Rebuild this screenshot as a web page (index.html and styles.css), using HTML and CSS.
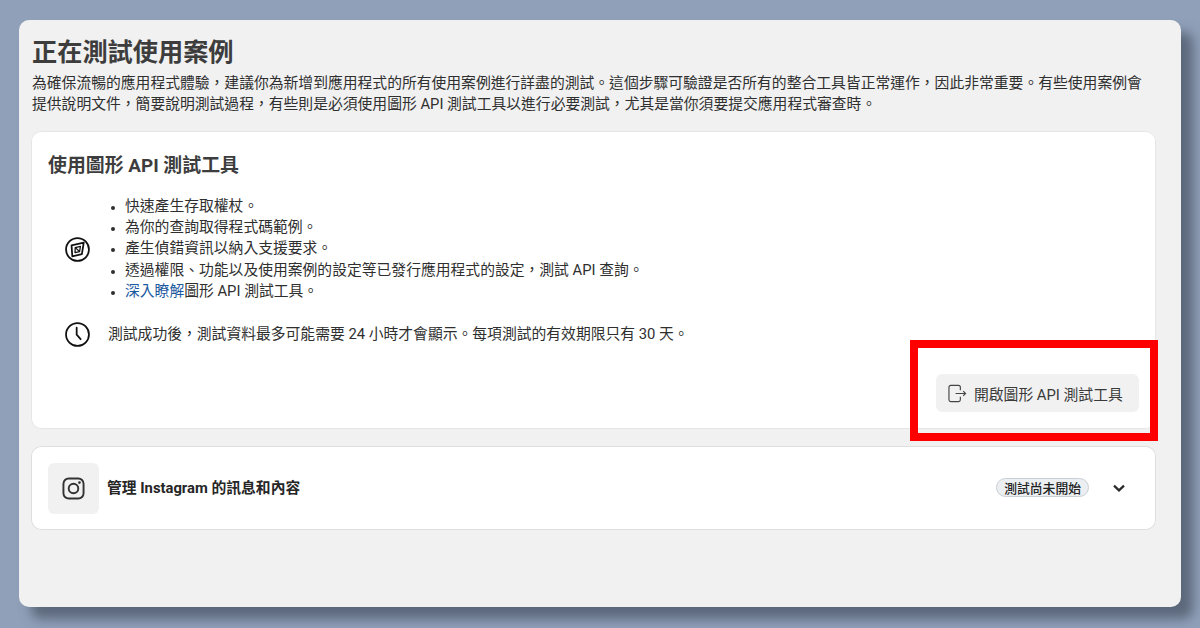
FILE: index.html
```html
<!DOCTYPE html>
<html lang="zh-Hant">
<head>
<meta charset="utf-8">
<title>正在測試使用案例</title>
<link rel="stylesheet" href="styles.css">
</head>
<body>
<main class="panel">
  <h1 class="title">正在測試使用案例</h1>
  <p class="intro">為確保流暢的應用程式體驗，建議你為新增到應用程式的所有使用案例進行詳盡的測試。這個步驟可驗證是否所有的整合工具皆正常運作，因此非常重要。有些使用案例會提供說明文件，簡要說明測試過程，有些則是必須使用圖形 API 測試工具以進行必要測試，尤其是當你須要提交應用程式審查時。</p>
  <section class="card tool-card">
    <h2 class="card-title">使用圖形 API 測試工具</h2>
    <div class="info-row list-row">
      <svg class="info-icon" viewBox="0 0 24 24" aria-hidden="true">
        <circle cx="12" cy="12" r="11" fill="none" stroke="#111" stroke-width="1.7"/>
        <path d="M6.3 8 L18 5.5 L16.2 16.5 L7 18.5 Z" fill="none" stroke="#111" stroke-width="1.7" stroke-linejoin="round"/>
        <path d="M9.8 10.2 L14.8 9 L14 14 L9.6 15 Z" fill="none" stroke="#111" stroke-width="1.2" stroke-linejoin="round"/>
        <path d="M9.8 10.2 L14 14" stroke="#111" stroke-width="1.2"/>
      </svg>
      <ul class="bullets">
        <li>快速產生存取權杖。</li>
        <li>為你的查詢取得程式碼範例。</li>
        <li>產生偵錯資訊以納入支援要求。</li>
        <li>透過權限、功能以及使用案例的設定等已發行應用程式的設定，測試 API 查詢。</li>
        <li><a class="link" href="#">深入瞭解</a>圖形 API 測試工具。</li>
      </ul>
    </div>
    <div class="info-row note-row">
      <svg class="info-icon" viewBox="0 0 24 24" aria-hidden="true">
        <circle cx="12" cy="12" r="11" fill="none" stroke="#111" stroke-width="1.7"/>
        <path d="M11.2 5.5 V12.2 L15 16.5" fill="none" stroke="#111" stroke-width="1.7" stroke-linecap="round" stroke-linejoin="round"/>
      </svg>
      <p class="note">測試成功後，測試資料最多可能需要 24 小時才會顯示。每項測試的有效期限只有 30 天。</p>
    </div>
    <div class="actions">
      <button class="btn" type="button">
        <svg class="btn-icon" viewBox="0 0 20 20" aria-hidden="true">
          <path d="M13 6.5 V3.5 Q13 1.5 11 1.5 H3 Q1 1.5 1 3.5 V16.5 Q1 18.5 3 18.5 H11 Q13 18.5 13 16.5 V13.5" fill="none" stroke="#444" stroke-width="1.2"/>
          <path d="M8 10 H18.5 M16 7.5 L18.5 10 L16 12.5" fill="none" stroke="#444" stroke-width="1.2"/>
        </svg>
        開啟圖形 API 測試工具
      </button>
    </div>
  </section>
  <section class="card ig-card">
    <div class="ig-tile">
      <svg class="ig-icon" viewBox="0 0 24 24" aria-hidden="true">
        <rect x="1.5" y="1.5" width="21" height="21" rx="5.5" fill="none" stroke="#333" stroke-width="2"/>
        <circle cx="12" cy="12" r="5" fill="none" stroke="#333" stroke-width="2"/>
        <circle cx="18.2" cy="5.8" r="1.4" fill="#333"/>
      </svg>
    </div>
    <span class="ig-label">管理 Instagram 的訊息和內容</span>
    <span class="badge">測試尚未開始</span>
    <svg class="chevron" viewBox="0 0 14 14" aria-hidden="true">
      <path d="M2 4.6 L7 9.4 L12 4.6" fill="none" stroke="#2a2a2a" stroke-width="2.2"/>
    </svg>
  </section>
  <div class="highlight"></div>
</main>
</body>
</html>
```

FILE: styles.css
```css
* { box-sizing: border-box; }
html, body { margin: 0; height: 100%; }
body {
  width: 1200px;
  height: 628px;
  overflow: hidden;
  padding: 20px 19px 21px;
  background: #90a0b9;
  font-family: Roboto, "Noto Sans CJK TC", sans-serif;
  color: #2f2f2f;
}
.panel {
  position: relative;
  height: 587px;
  padding: 16px 25px 0 12px;
  background: #f1f1f1;
  border-radius: 10px;
  box-shadow: 12px 12px 12px rgba(70, 80, 95, 0.7);
}
.title {
  margin: 0 0 0 1px;
  font-size: 25.2px;
  line-height: 34px;
  font-weight: 700;
  color: #3d3d3d;
}
.intro {
  margin: 3px 0 0 1px;
  width: 1118px;
  font-size: 14.8px;
  line-height: 20.5px;
  color: #2f2f2f;
}
.card {
  background: #fff;
  border-radius: 10px;
  box-shadow: inset 0 0 0 1px #e6e6e6;
}
.tool-card {
  margin-top: 17px;
  height: 298px;
  padding: 22px 17px 0;
  display: flex;
  flex-direction: column;
}
.card-title {
  margin: 0;
  font-size: 18.9px;
  line-height: 25px;
  font-weight: 700;
  color: #3d3d3d;
}
.info-row {
  display: flex;
  align-items: center;
  margin-left: 17px;
}
.list-row { margin-top: 18px; }
.note-row { margin-top: 20px; }
.info-icon { width: 25px; height: 25px; flex: none; }
.bullets {
  margin: 0 0 0 18px;
  padding: 0 0 0 17px;
  font-size: 14.8px;
  line-height: 21.2px;
}
.bullets li { padding: 0; }
.bullets li::marker { font-size: 12px; }
.link { color: #1c5a9f; text-decoration: none; }
.note {
  margin: 0 0 0 18px;
  font-size: 14.8px;
  line-height: 21px;
}
.actions {
  margin-top: auto;
  padding-bottom: 17px;
  display: flex;
  justify-content: flex-end;
}
.btn {
  display: flex;
  align-items: center;
  gap: 7px;
  width: 203px;
  height: 38px;
  padding: 0 0 0 12px;
  border: 0;
  border-radius: 6px;
  background: #f1f1f1;
  font: inherit;
  font-size: 14.8px;
  color: #3a3a3a;
}
.btn-icon { width: 19px; height: 19px; flex: none; }
.ig-card {
  margin-top: 17px;
  height: 84px;
  padding: 0 30px 0 17px;
  display: flex;
  align-items: center;
  box-shadow: inset 0 0 0 1px #dedede;
}
.ig-tile {
  width: 51px;
  height: 51px;
  flex: none;
  display: flex;
  align-items: center;
  justify-content: center;
  background: #f1f1f1;
  border-radius: 6px;
}
.ig-icon { width: 23px; height: 23px; }
.ig-label {
  margin-left: 8px;
  padding-bottom: 4px;
  font-size: 14.8px;
  font-weight: 700;
  color: #262626;
}
.badge {
  margin-left: auto;
  margin-bottom: 2px;
  height: 19px;
  padding: 0 7px;
  display: flex;
  align-items: center;
  background: #ebeff2;
  border: 1px solid #c9d0d6;
  border-radius: 10px;
  font-size: 12.8px;
  font-weight: 500;
  color: #222;
}
.chevron { width: 14px; height: 14px; margin-left: 23px; flex: none; }
.highlight {
  position: absolute;
  left: 891px;
  top: 320px;
  width: 248px;
  height: 101px;
  border: 8px solid #ff0000;
  pointer-events: none;
}
```
